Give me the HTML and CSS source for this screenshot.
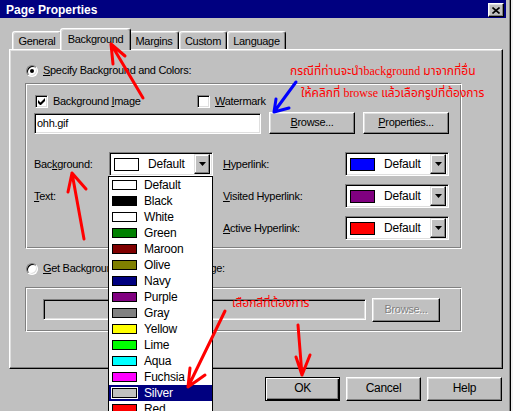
FILE: index.html
```html
<!DOCTYPE html>
<html>
<head>
<meta charset="utf-8">
<title>Page Properties</title>
<link rel="stylesheet" href="styles.css">
</head>
<body>
<div class="window">
  <div class="titlebar">
    <span class="title">Page Properties</span>
    <span class="close"><svg width="8" height="7" viewBox="0 0 8 7"><path d="M0.5 0.5L7.5 6.5M7.5 0.5L0.5 6.5" stroke="#000" stroke-width="1.6" fill="none"/></svg></span>
  </div>

  <div class="tabs">
    <div class="tab w-general">General</div>
    <div class="tab active">Background</div>
    <div class="tab w-margins">Margins</div>
    <div class="tab w-custom">Custom</div>
    <div class="tab w-language">Language</div>
  </div>

  <div class="panel">
    <div class="radio-row">
      <span class="radio on"></span><span><u>S</u>pecify Background and Colors:</span>
    </div>

    <div class="group group1">
      <div class="check-row">
        <div class="check-item first">
          <span class="check"><svg width="7" height="7" viewBox="0 0 7 7"><path d="M0 2v3l2 2h1l4-4V0L2.5 4.5z" fill="#000"/></svg></span>
          <span>Background <u>I</u>mage</span>
        </div>
        <div class="check-item">
          <span class="check"></span>
          <span><u>W</u>atermark</span>
        </div>
      </div>

      <div class="field-row">
        <div class="textbox">ohh.gif</div>
        <div class="btn"><u>B</u>rowse...</div>
        <div class="btn"><u>P</u>roperties...</div>
      </div>

      <div class="colors">
        <div class="lbl">Bac<u>k</u>ground:</div>
        <div class="select">
          <span class="sw sw-white"></span><span class="val">Default</span>
          <span class="arrow"><svg width="7" height="4" viewBox="0 0 7 4"><path d="M0 0h7L3.5 4z" fill="#000"/></svg></span>
          <div class="list">
            <div class="item"><span class="sw sw-white"></span>Default</div>
            <div class="item"><span class="sw sw-black"></span>Black</div>
            <div class="item"><span class="sw sw-white"></span>White</div>
            <div class="item"><span class="sw sw-green"></span>Green</div>
            <div class="item"><span class="sw sw-maroon"></span>Maroon</div>
            <div class="item"><span class="sw sw-olive"></span>Olive</div>
            <div class="item"><span class="sw sw-navy"></span>Navy</div>
            <div class="item"><span class="sw sw-purple"></span>Purple</div>
            <div class="item"><span class="sw sw-gray"></span>Gray</div>
            <div class="item"><span class="sw sw-yellow"></span>Yellow</div>
            <div class="item"><span class="sw sw-lime"></span>Lime</div>
            <div class="item"><span class="sw sw-aqua"></span>Aqua</div>
            <div class="item"><span class="sw sw-fuchsia"></span>Fuchsia</div>
            <div class="item sel"><span class="sw sw-silver"></span>Silver</div>
            <div class="item"><span class="sw sw-red"></span>Red</div>
          </div>
        </div>
        <div class="lbl"><u>H</u>yperlink:</div>
        <div class="select">
          <span class="sw sw-blue"></span><span class="val">Default</span>
          <span class="arrow"><svg width="7" height="4" viewBox="0 0 7 4"><path d="M0 0h7L3.5 4z" fill="#000"/></svg></span>
        </div>

        <div class="lbl"><u>T</u>ext:</div>
        <div class="select">
          <span class="sw sw-black"></span>
          <span class="arrow"><svg width="7" height="4" viewBox="0 0 7 4"><path d="M0 0h7L3.5 4z" fill="#000"/></svg></span>
        </div>
        <div class="lbl"><u>V</u>isited Hyperlink:</div>
        <div class="select">
          <span class="sw sw-purple"></span><span class="val">Default</span>
          <span class="arrow"><svg width="7" height="4" viewBox="0 0 7 4"><path d="M0 0h7L3.5 4z" fill="#000"/></svg></span>
        </div>

        <div class="lbl"></div>
        <div></div>
        <div class="lbl"><u>A</u>ctive Hyperlink:</div>
        <div class="select">
          <span class="sw sw-red"></span><span class="val">Default</span>
          <span class="arrow"><svg width="7" height="4" viewBox="0 0 7 4"><path d="M0 0h7L3.5 4z" fill="#000"/></svg></span>
        </div>
      </div>
    </div>

    <div class="radio-row row2">
      <span class="radio"></span><span><u>G</u>et Background and Colors from Page:</span>
    </div>

    <div class="group group2">
      <div class="textbox disabled"></div>
      <div class="btn btn-disabled">Browse...</div>
    </div>
  </div>

  <div class="buttons">
    <div class="btn btn-main default">OK</div>
    <div class="btn btn-main">Cancel</div>
    <div class="btn btn-main">Help</div>
  </div>

  <div class="note note1">กรณีที่ท่านจะนำ<span class="latin">background</span> มาจากที่อื่น</div>
  <div class="note note2">ให้คลิกที่ <span class="latin">browse</span> แล้วเลือกรูปที่ต้องการ</div>
  <div class="note note3">เลือกสีที่ต้องการ</div>

  <svg class="arrows" width="513" height="411" viewBox="0 0 513 411">
    <g fill="none" stroke="#ff0000" stroke-width="3" stroke-linecap="round" stroke-linejoin="round">
      <path d="M143 98L111 44M111 44L113 64M111 44L125 56"/>
      <path d="M84 239L72 173M72 173L68 192M72 173L86 189"/>
      <path d="M225 311L188 387M188 387L190 368M188 387L205 375"/>
      <path d="M298 325L302 375M302 375L296 357M302 375L310 355"/>
    </g>
    <path d="M296 82L274 112M274 112L276 99M274 112L289 108" fill="none" stroke="#0000ff" stroke-width="3" stroke-linecap="round" stroke-linejoin="round"/>
  </svg>
</div>
</body>
</html>
```

FILE: styles.css
```css
* { box-sizing: border-box; }
html, body { margin: 0; padding: 0; }
body {
  width: 513px;
  height: 411px;
  overflow: hidden;
  background: #f2f2f2;
  font-family: "Liberation Sans", Arial, sans-serif;
  font-size: 11px;
  letter-spacing: -0.3px;
  color: #000;
}
u { text-decoration: underline; text-underline-offset: 1px; }

.window {
  position: relative;
  width: 511px;
  height: 411px;
  overflow: hidden;
  background: #c0c0c0;
  border-right: 1px solid #000;
  box-shadow: inset -1px 0 #808080;
}

/* title bar */
.titlebar {
  width: 506px;
  height: 18px;
  background: #000080;
  color: #fff;
  display: flex;
  justify-content: space-between;
  align-items: flex-start;
  padding: 0 2px 0 6px;
}
.title {
  font-weight: bold;
  font-size: 12px;
  letter-spacing: 0;
  line-height: 14px;
  padding-top: 3px;
}
.close {
  margin-top: 3px;
  width: 16px;
  height: 14px;
  background: #c0c0c0;
  border: 1px solid;
  border-color: #fff #000 #000 #fff;
  box-shadow: inset -1px -1px #808080, inset 1px 1px #dfdfdf;
  display: flex;
  align-items: center;
  justify-content: center;
}

/* tabs */
.tabs {
  display: flex;
  align-items: flex-end;
  height: 22px;
  margin-top: 10px;
  padding-left: 12px;
}
.tab {
  height: 19px;
  padding-top: 3px;
  line-height: 13px;
  text-align: center;
  background: #c0c0c0;
  border: 1px solid;
  border-bottom: none;
  border-color: #fff #000 transparent #fff;
  border-radius: 3px 3px 0 0;
  box-shadow: inset -1px 0 #808080, inset 1px 1px #dfdfdf;
}
.w-general { width: 50px; }
.w-margins { width: 50px; }
.w-custom { width: 48px; }
.w-language { width: 59px; }
.tab.active {
  width: 71px;
  height: 22px;
  padding-top: 4px;
  margin: 0 -2px;
  position: relative;
  z-index: 2;
}

/* panel */
.panel {
  position: relative;
  margin: -1px 0 0 9px;
  width: 494px;
  height: 320px;
  border: 1px solid;
  border-color: #fff #000 #000 #fff;
  box-shadow: inset -1px -1px #808080, inset 1px 1px #dfdfdf;
  padding: 14px 0 0 15px;
}

.radio-row {
  display: flex;
  align-items: center;
  gap: 5px;
  height: 13px;
  line-height: 13px;
  margin-left: 1px;
}
.radio-row.row2 { margin-top: 13px; }
.radio {
  position: relative;
  width: 12px;
  height: 12px;
  flex: none;
  border-radius: 50%;
  background: #fff;
  border: 1px solid;
  border-color: #808080 #fff #fff #808080;
  box-shadow: inset 1px 1px #000, inset -1px -1px #dfdfdf;
}
.radio.on::after {
  content: "";
  position: absolute;
  left: 3px;
  top: 3px;
  width: 4px;
  height: 4px;
  border-radius: 50%;
  background: #000;
}

/* group boxes */
.group {
  width: 437px;
  border: 1px solid;
  border-color: #808080 #fff #fff #808080;
  box-shadow: inset 1px 1px #fff, inset -1px -1px #808080;
}
.group1 {
  margin-top: 6px;
  height: 166px;
  padding: 11px 0 0 8px;
}
.group2 {
  margin-top: 12px;
  height: 45px;
  padding-left: 17px;
  display: flex;
  align-items: center;
  gap: 6px;
}

.check-row {
  display: flex;
  align-items: center;
  height: 13px;
  line-height: 13px;
}
.check-item {
  display: flex;
  align-items: center;
  gap: 5px;
}
.check-item.first { width: 162px; margin-left: 1px; }
.check {
  width: 13px;
  height: 13px;
  background: #fff;
  border: 1px solid;
  border-color: #808080 #fff #fff #808080;
  box-shadow: inset 1px 1px #000, inset -1px -1px #dfdfdf;
  display: flex;
  align-items: center;
  justify-content: center;
}

.field-row {
  display: flex;
  align-items: center;
  gap: 8px;
  height: 22px;
  margin-top: 4px;
}
.textbox {
  width: 227px;
  height: 21px;
  background: #fff;
  border: 1px solid;
  border-color: #808080 #fff #fff #808080;
  box-shadow: inset 1px 1px #000, inset -1px -1px #dfdfdf;
  padding: 3px 0 0 2px;
  line-height: 13px;
}
.textbox.disabled {
  width: 323px;
  background: #c0c0c0;
}

.btn {
  width: 86px;
  height: 22px;
  background: #c0c0c0;
  border: 1px solid;
  border-color: #fff #000 #000 #fff;
  box-shadow: inset -1px -1px #808080, inset 1px 1px #dfdfdf;
  text-align: center;
  line-height: 19px;
}
.btn-disabled {
  width: 68px;
  height: 24px;
  line-height: 21px;
  color: #808080;
  text-shadow: 1px 1px #fff;
}
.buttons {
  display: flex;
  justify-content: flex-end;
  gap: 6px;
  width: 502px;
  margin-top: 8px;
}
.btn-main {
  width: 75px;
  height: 24px;
  line-height: 21px;
  font-size: 12px;
}
.btn.default {
  border-color: #000;
  box-shadow: inset 1px 1px #fff, inset -1px -1px #000, inset -2px -2px #808080;
}

/* colour grid */
.colors {
  display: grid;
  grid-template-columns: 75px 114px 122px 104px;
  grid-auto-rows: 24px;
  row-gap: 8px;
  align-items: center;
  margin-top: 18px;
}
.lbl { line-height: 13px; }
.select {
  position: relative;
  width: 104px;
  height: 24px;
  display: flex;
  align-items: center;
  background: #fff;
  border: 1px solid;
  border-color: #808080 #fff #fff #808080;
  box-shadow: inset 1px 1px #000, inset -1px -1px #dfdfdf;
  padding: 2px;
}
.select > .sw {
  width: 25px;
  height: 13px;
  margin-left: 2px;
}
.val { margin-left: 9px; font-size: 12px; letter-spacing: -0.2px; }
.arrow {
  margin-left: auto;
  width: 16px;
  height: 20px;
  background: #c0c0c0;
  border: 1px solid;
  border-color: #dfdfdf #000 #000 #dfdfdf;
  box-shadow: inset -1px -1px #808080, inset 1px 1px #fff;
  display: flex;
  align-items: center;
  justify-content: center;
}

.sw {
  flex: none;
  display: inline-block;
  border: 1px solid #000;
}
.sw-white { background: #fff; }
.sw-black { background: #000; }
.sw-green { background: #008000; }
.sw-maroon { background: #800000; }
.sw-olive { background: #808000; }
.sw-navy { background: #000080; }
.sw-purple { background: #800080; }
.sw-gray { background: #808080; }
.sw-yellow { background: #ffff00; }
.sw-lime { background: #00ff00; }
.sw-aqua { background: #00ffff; }
.sw-fuchsia { background: #ff00ff; }
.sw-silver { background: #c0c0c0; }
.sw-red { background: #ff0000; }
.sw-blue { background: #0000ff; }

/* open dropdown list */
.list {
  position: absolute;
  left: -2px;
  top: 23px;
  width: 105px;
  background: #fff;
  border: 1px solid #000;
  z-index: 5;
}
.item {
  display: flex;
  align-items: center;
  height: 16px;
  padding-left: 3px;
  font-size: 12px;
  letter-spacing: -0.2px;
}
.item .sw {
  width: 25px;
  height: 10px;
  margin-right: 7px;
}
.item.sel {
  background: #000080;
  color: #fff;
}
.item.sel .sw { box-shadow: 0 0 0 1px #fff; }

/* annotations */
.note {
  position: absolute;
  z-index: 10;
  color: #ff0000;
  font-family: "Noto Sans Thai", "Noto Serif Thai", "Loma", "Garuda", "Norasi", "DejaVu Sans", "Noto Sans", sans-serif;
  font-size: 12px;
  letter-spacing: 0;
  line-height: 16px;
  white-space: nowrap;
}
.latin { font-family: "Liberation Serif", "Times New Roman", serif; }
.note1 { left: 290px; top: 63px; }
.note2 { left: 301px; top: 85px; }
.note3 { left: 232px; top: 295px; }

.arrows {
  position: absolute;
  left: 0;
  top: 0;
  z-index: 11;
  pointer-events: none;
}
```
